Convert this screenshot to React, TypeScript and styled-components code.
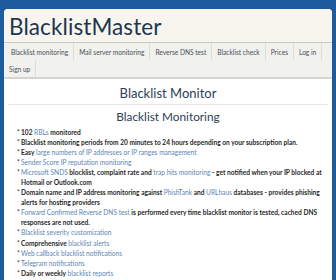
import React from "react";
import styled, { createGlobalStyle } from "styled-components";

const Global = createGlobalStyle`
  html, body { margin: 0; padding: 0; background: #1e5b9c; }
  body { font-family: Lato, "Open Sans", sans-serif; overflow: hidden; }
`;

const Page = styled.div`
  padding: 9px 4px 0 4px;
  width: 336px;
  box-sizing: border-box;
`;

const Card = styled.div`
  background: #fff;
  border-radius: 4px 4px 0 0;
  overflow: hidden;
  min-height: 300px;
`;

const Header = styled.div`
  background: #f7f5ee;
  height: 33px;
  border-bottom: 1px solid #c9c9c6;
  display: flex;
  align-items: center;
  padding-left: 5px;
`;

const Logo = styled.div`
  font-size: 22.5px;
  color: #1c3550;
  letter-spacing: 0.1px;
  line-height: 1;
  margin-top: 3px;
`;

const Nav = styled.nav`
  background: #f1f1ee;
  display: flex;
  flex-wrap: wrap;
  border-bottom: 2px solid #d4d4d2;
`;

const NavItem = styled.a`
  font-size: 6.6px;
  color: #4a4f57;
  height: 17px;
  display: flex;
  align-items: center;
  padding: 0 5px;
  border-right: 1px solid #dcdcd9;
  text-decoration: none;
  white-space: nowrap;
  &:first-child { padding-left: 7px; }
`;

const Content = styled.main`
  padding: 6px 4px 0 4px;
`;

const Title = styled.h1`
  margin: 0;
  font-size: 13px;
  font-weight: 400;
  color: #2c3e55;
  text-align: center;
  line-height: 16px;
  padding-bottom: 3px;
  border-bottom: 1px solid #e6e6e6;
`;

const Subtitle = styled.h2`
  margin: 4px 0 0 0;
  font-size: 11.8px;
  font-weight: 400;
  color: #2c3e55;
  text-align: center;
  line-height: 16px;
`;

const List = styled.ul`
  margin: 2px 0 0 0;
  padding: 0 0 0 13px;
  list-style: none;
`;

const Item = styled.li`
  position: relative;
  font-size: 6.6px;
  line-height: 10.05px;
  color: #1f1f1f;
  font-weight: 700;
  padding-right: 2px;
  &::before {
    content: "*";
    position: absolute;
    left: -4px;
    top: 0;
    font-weight: 400;
    color: #333;
  }
`;

const L = styled.a`
  color: #5b84b5;
  font-weight: 400;
  text-decoration: none;
`;

export default function App() {
  return (
    <>
      <Global />
      <Page>
        <Card>
          <Header>
            <Logo>BlacklistMaster</Logo>
          </Header>
          <Nav>
            <NavItem>Blacklist monitoring</NavItem>
            <NavItem>Mail server monitoring</NavItem>
            <NavItem>Reverse DNS test</NavItem>
            <NavItem>Blacklist check</NavItem>
            <NavItem>Prices</NavItem>
            <NavItem>Log in</NavItem>
            <NavItem>Sign up</NavItem>
          </Nav>
          <Content>
            <Title>Blacklist Monitor</Title>
            <Subtitle>Blacklist Monitoring</Subtitle>
            <List>
              <Item>102 <L>RBLs</L> monitored</Item>
              <Item>Blacklist monitoring periods from 20 minutes to 24 hours depending on your subscription plan.</Item>
              <Item>Easy <L>large numbers of IP addresses or IP ranges management</L></Item>
              <Item><L>Sender Score IP reputation monitoring</L></Item>
              <Item><L>Microsoft SNDS</L> blocklist, complaint rate and <L>trap hits monitoring</L> - get notified when your IP blocked at Hotmail or Outlook.com</Item>
              <Item>Domain name and IP address monitoring against <L>PhishTank</L> and <L>URLhaus</L> databases - provides phishing alerts for hosting providers</Item>
              <Item><L>Forward Confirmed Reverse DNS test</L> is performed every time blacklist monitor is tested, cached DNS responses are not used.</Item>
              <Item><L>Blacklist severity customization</L></Item>
              <Item>Comprehensive <L>blacklist alerts</L></Item>
              <Item><L>Web callback blacklist notifications</L></Item>
              <Item><L>Telegram notifications</L></Item>
              <Item>Daily or weekly <L>blacklist reports</L></Item>
            </List>
          </Content>
        </Card>
      </Page>
    </>
  );
}
